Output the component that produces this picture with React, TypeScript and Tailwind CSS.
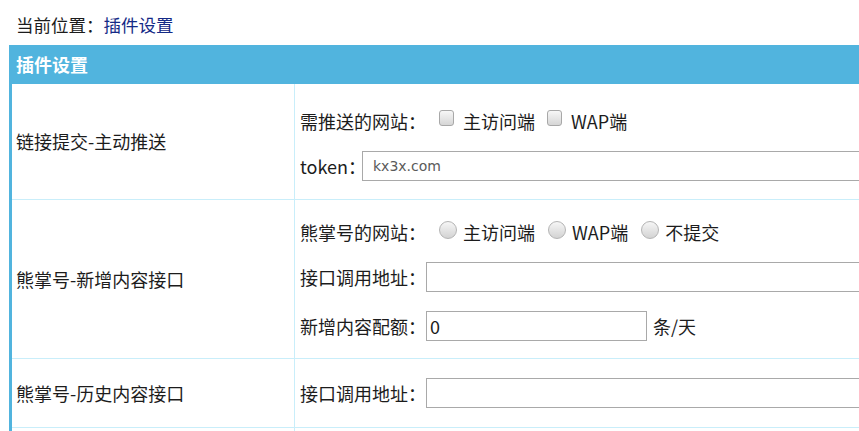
const FONT = "font-['Noto_Sans_CJK_SC',sans-serif]";

function Check({ label }: { label: string }) {
  return (
    <label className="flex items-center mr-[12px] shrink-0">
      <span className="mb-[6px] w-[15px] h-[16px] rounded-[3px] border border-[#a8a8a8] bg-linear-to-b from-[#f7f7f7] to-[#d6d6d6]" />
      <span className="ml-[9px]">{label}</span>
    </label>
  );
}

function Radio({ label }: { label: string }) {
  return (
    <label className="flex items-center mr-[13px] shrink-0">
      <span className="mb-[4px] w-[18px] h-[18px] rounded-full border border-[#b4b4b4] bg-linear-to-b from-[#f6f6f6] to-[#d3d3d3]" />
      <span className="ml-[6px]">{label}</span>
    </label>
  );
}

function Line({ children, className = "" }: { children: React.ReactNode; className?: string }) {
  return <div className={`flex items-center h-[30px] whitespace-nowrap ${className}`}>{children}</div>;
}

function Row({ title, h, children, top }: { title: string; h: string; children: React.ReactNode; top: string }) {
  return (
    <div className={`flex border-b border-[#c9eefa] ${h}`}>
      <div className="w-[283px] shrink-0 border-r border-[#c9eefa] flex items-center pl-[4px]">{title}</div>
      <div className={`flex-1 pl-[5px] flex flex-col ${top}`}>{children}</div>
    </div>
  );
}

export default function App() {
  return (
    <div className={`w-[859px] h-[431px] overflow-hidden bg-white text-[18px] text-[#1c1c1c] ${FONT}`}>
      <div className="h-[45px] flex items-center pl-[16px] pt-[6px] text-[17.5px]">
        <span>当前位置：</span>
        <span className="text-[#142a86]">插件设置</span>
      </div>

      <div className="ml-[9px] w-[1000px]">
        <div className="h-[39px] bg-[#51b4de] flex items-center pl-[7px] text-white font-bold text-[18px]">插件设置</div>

        <div className="border-l-[3px] border-[#51b4de]">
          <Row title="链接提交-主动推送" h="h-[116px]" top="pt-[22px] gap-[15px]">
            <Line>
              <span className="mr-[13px] shrink-0">需推送的网站：</span>
              <Check label="主访问端" />
              <Check label="WAP端" />
            </Line>
            <Line>
              <span className="w-[62px] shrink-0">token：</span>
              <input
                placeholder="kx3x.com"
                className="h-[30px] w-[600px] shrink-0 border border-[#a9a9a9] px-[10px] text-[14px] font-['DejaVu_Sans',sans-serif] placeholder:text-[#5a5a5a] outline-none"
              />
            </Line>
          </Row>

          <Row title="熊掌号-新增内容接口" h="h-[159px]" top="pt-[17px]">
            <Line>
              <span className="mr-[13px] shrink-0">熊掌号的网站：</span>
              <Radio label="主访问端" />
              <Radio label="WAP端" />
              <Radio label="不提交" />
            </Line>
            <Line className="mt-[15px]">
              <span className="w-[126px] shrink-0">接口调用地址：</span>
              <input className="h-[30px] w-[600px] shrink-0 border border-[#a9a9a9] outline-none" />
            </Line>
            <Line className="mt-[19px]">
              <span className="w-[126px] shrink-0">新增内容配额：</span>
              <input
                defaultValue="0"
                className="h-[30px] w-[221px] shrink-0 border border-[#a9a9a9] px-[3px] text-[18px] outline-none"
              />
              <span className="ml-[6px] shrink-0">条/天</span>
            </Line>
          </Row>

          <Row title="熊掌号-历史内容接口" h="h-[69px]" top="justify-center">
            <Line>
              <span className="w-[126px] shrink-0">接口调用地址：</span>
              <input className="h-[30px] w-[600px] shrink-0 border border-[#a9a9a9] outline-none" />
            </Line>
          </Row>

          <div className="flex h-[40px]">
            <div className="w-[283px] shrink-0 border-r border-[#c9eefa]" />
            <div className="flex-1" />
          </div>
        </div>
      </div>
    </div>
  );
}
